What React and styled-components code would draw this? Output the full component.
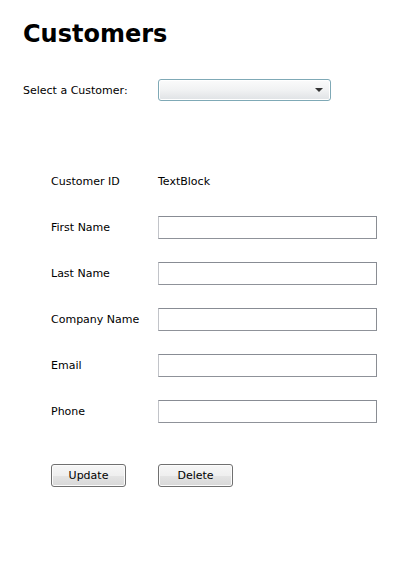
import { Fragment } from "react";
import styled, { createGlobalStyle } from "styled-components";

const GlobalStyle = createGlobalStyle`
  body {
    margin: 0;
    background: #ffffff;
    font-family: "DejaVu Sans", Verdana, sans-serif;
    color: #000000;
  }
`;

const Page = styled.div`
  width: 415px;
  height: 566px;
  padding: 18px 0 0 23px;
  box-sizing: border-box;
`;

const Title = styled.h1`
  margin: 0;
  font-size: 24px;
  font-weight: 700;
  line-height: 32px;
`;

const SelectRow = styled.div`
  display: flex;
  align-items: center;
  margin-top: 29px;
  font-size: 11px;
`;

const SelectLabel = styled.span`
  width: 135px;
`;

const Combo = styled.div`
  position: relative;
  width: 173px;
  height: 22px;
  box-sizing: border-box;
  border: 1px solid #7fa9b6;
  border-radius: 3px;
  background: linear-gradient(#fbfbfb 0%, #f1f2f3 50%, #dfe2e5 100%);
  box-shadow: inset 0 0 0 1px #ffffff;
`;

const Arrow = styled.span`
  position: absolute;
  right: 7px;
  top: 8px;
  width: 0;
  height: 0;
  border-left: 4px solid transparent;
  border-right: 4px solid transparent;
  border-top: 4px solid #333333;
`;

const Form = styled.div`
  display: grid;
  grid-template-columns: 107px 219px;
  grid-template-rows: 23px repeat(5, 23px);
  row-gap: 23px;
  align-items: center;
  margin: 69px 0 0 28px;
  font-size: 11px;
`;

const Label = styled.span``;

const Value = styled.span``;

const TextBox = styled.div`
  height: 23px;
  box-sizing: border-box;
  border: 1px solid #abadb3;
  border-top-color: #888c94;
  border-left-color: #c2c4c9;
  border-right-color: #8a8d93;
  border-bottom-color: #8f9299;
  background: #ffffff;
`;

const Buttons = styled.div`
  display: flex;
  gap: 32px;
  margin: 41px 0 0 28px;
`;

const Button = styled.button`
  width: 75px;
  height: 23px;
  padding: 0;
  border: 1px solid #707070;
  border-radius: 3px;
  background: linear-gradient(#f6f6f6 0%, #efefef 50%, #e4e4e4 51%, #d8d8d8 100%);
  box-shadow: inset 0 0 0 1px #fcfcfc;
  font-family: "DejaVu Sans", Verdana, sans-serif;
  font-size: 11px;
  color: #000000;
`;

const fields = ["First Name", "Last Name", "Company Name", "Email", "Phone"];

const App = () => {
  return (
    <Page>
      <GlobalStyle />
      <Title>Customers</Title>
      <SelectRow>
        <SelectLabel>Select a Customer:</SelectLabel>
        <Combo>
          <Arrow />
        </Combo>
      </SelectRow>
      <Form>
        <Label>Customer ID</Label>
        <Value>TextBlock</Value>
        {fields.map((f) => (
          <Fragment key={f}>
            <Label>{f}</Label>
            <TextBox />
          </Fragment>
        ))}
      </Form>
      <Buttons>
        <Button>Update</Button>
        <Button>Delete</Button>
      </Buttons>
    </Page>
  );
};

export default App;
